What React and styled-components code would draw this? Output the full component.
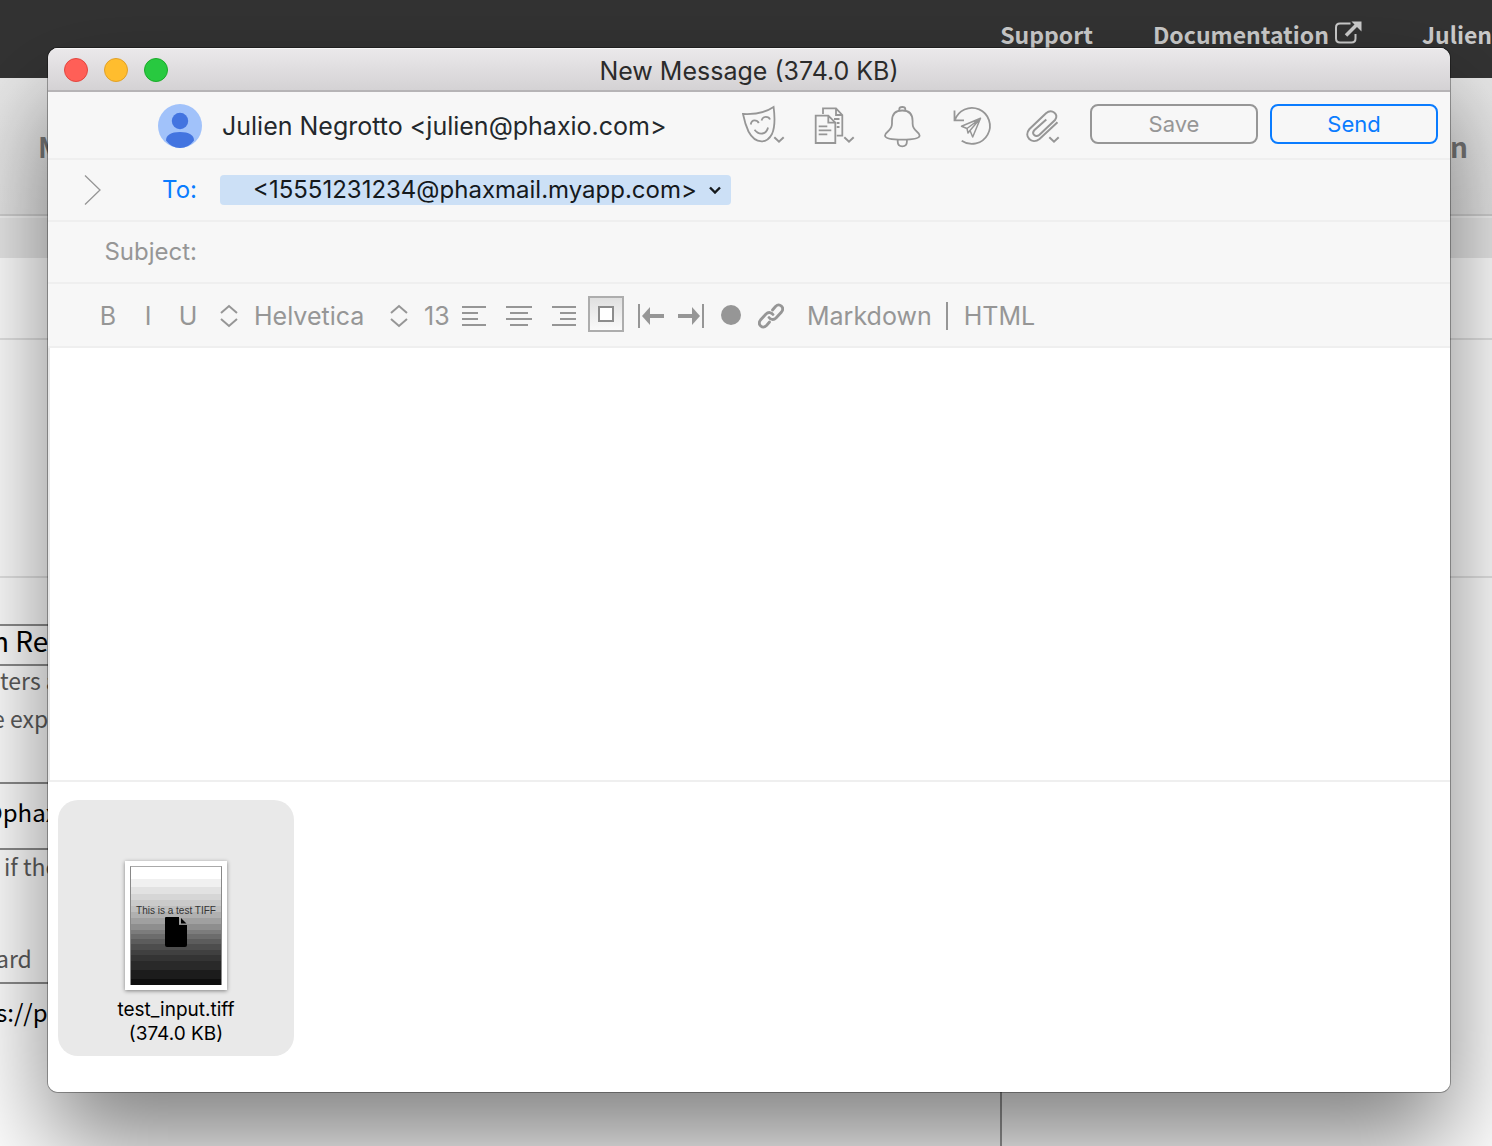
import React from "react";
import styled, { createGlobalStyle } from "styled-components";

const GREY = "#969696";
const BLUE = "#0a7cff";
const RULE = "#efefef";
const uiFont = `Inter, "Liberation Sans", sans-serif`;
const siteFont = `"Noto Sans CJK SC", "Noto Sans", sans-serif`;

const GlobalStyle = createGlobalStyle`
  * { box-sizing: border-box; }
  body { margin: 0; background: #fff; font-family: ${uiFont}; }
  button, input, textarea, select { font: inherit; color: inherit; }
`;

/* ---------- web page behind the window ---------- */

const Desktop = styled.div`
  position: relative;
  min-height: 100vh;
  overflow: hidden;
  display: flex;
  flex-direction: column;
  font-family: ${siteFont};
`;

const SiteHeader = styled.header`
  height: 78px;
  padding-bottom: 10px;
  background: #333;
  display: flex;
  align-items: center;
  justify-content: flex-end;
  gap: 60px;
`;

const SiteLink = styled.a`
  display: flex;
  align-items: center;
  gap: 6px;
  color: #ccc;
  font-size: 23px;
  line-height: 32px;
  font-weight: 700;
  text-decoration: none;
`;

const SiteTabs = styled.nav`
  height: 138px;
  padding: 0 24px 0 38px;
  display: flex;
  align-items: center;
  justify-content: space-between;
  background: linear-gradient(#e9e9e9, #e5e5e5);
  border-bottom: 2px solid #cfcfcf;
`;

const SiteTab = styled.a`
  color: #777;
  font-size: 28px;
  line-height: 40px;
  font-weight: 700;
  text-decoration: none;
`;

const SiteSubBar = styled.div`
  height: 42px;
  background: #e8e8e8;
  border-top: 2px solid #f2f2f2;
`;

const SiteBand = styled.div`
  height: ${(p) => p.$height}px;
  border-bottom: 2px solid #e4e4e4;
`;

const SiteForm = styled.main`
  flex: 1;
  width: 1002px;
  padding-top: 46px;
  border-right: 2px solid #999;
`;

const FormBlock = styled.div`
  height: ${(p) => p.$height}px;
  border-top: 2px solid #8c8c8c;
  overflow: hidden;
`;

const FormText = styled.p`
  margin: 0;
  text-indent: ${(p) => p.$indent || 0}px;
  padding-top: ${(p) => p.$space || 0}px;
  color: ${(p) => (p.$strong ? "#000" : "#5c5c5c")};
  font-size: ${(p) => (p.$large ? 28 : p.$strong ? 24 : 23)}px;
  line-height: 28px;
  white-space: nowrap;
`;

/* ---------- compose window ---------- */

const Window = styled.form`
  position: absolute;
  inset: 48px 42px 54px 48px;
  display: flex;
  flex-direction: column;
  border-radius: 10px;
  background: #fff;
  overflow: hidden;
  font-family: ${uiFont};
`;

const WindowShadow = styled.div`
  position: absolute;
  inset: 48px 42px 54px 48px;
  border-radius: 10px;
  box-shadow: 0 0 0 1px rgba(0, 0, 0, 0.32), 0 50px 100px rgba(0, 0, 0, 0.5);
`;

const TitleBar = styled.div`
  height: 44px;
  flex: none;
  display: grid;
  grid-template-columns: 1fr auto 1fr;
  align-items: center;
  padding: 2px 16px 0;
  background: linear-gradient(#ebe9eb, #d4d2d4);
  border-bottom: 2px solid #b6b4b6;
  box-shadow: inset 0 1px 0 #f6f5f6;
`;

const Lights = styled.div`
  display: flex;
  gap: 16px;
`;

const Light = styled.button`
  width: 24px;
  height: 24px;
  padding: 0;
  border: 1px solid ${(p) => p.$edge};
  border-radius: 50%;
  background: ${(p) => p.$fill};
`;

const Title = styled.h1`
  margin: 0;
  padding-top: 2px;
  font-size: 25px;
  line-height: 32px;
  font-weight: 400;
  color: #2b2b2b;
`;

const Row = styled.div`
  height: ${(p) => p.$height || 62}px;
  flex: none;
  display: flex;
  align-items: center;
  background: #f7f7f7;
  border-bottom: 2px solid ${RULE};
`;

const SenderRow = styled(Row)`
  padding-bottom: 2px;
`;

const FormatRow = styled(Row)`
  padding-top: 2px;
`;

const Sender = styled.div`
  flex: 1;
  display: flex;
  align-items: center;
  gap: 20px;
  padding: 4px 0 0 110px;
  font-size: 25px;
  line-height: 32px;
  color: #23282c;
  white-space: nowrap;
`;

const IconButton = styled.button`
  width: ${(p) => p.$width}px;
  height: 60px;
  flex: none;
  padding: 0;
  border: 0;
  background: none;
  color: ${GREY};
  display: flex;
  align-items: center;
  justify-content: center;
  font-size: 25px;
  svg { display: block; flex: none; }
`;

const Actions = styled.div`
  display: flex;
  gap: 12px;
  padding: 0 12px;
`;

const ActionButton = styled.button`
  width: 168px;
  height: 40px;
  padding: 0;
  border: 2px solid currentColor;
  border-radius: 8px;
  background: transparent;
  color: ${(p) => (p.$primary ? BLUE : GREY)};
  font-size: 22px;
  line-height: 32px;
`;

const LabelCell = styled.div`
  width: 172px;
  flex: none;
  padding: 0 23px 0 36px;
  display: flex;
  align-items: center;
  justify-content: space-between;
`;

const Disclosure = styled.button`
  padding: 0;
  border: 0;
  background: none;
  color: ${GREY};
  svg { display: block; }
`;

const FieldLabel = styled.label`
  margin-left: auto;
  color: ${(p) => (p.$active ? BLUE : GREY)};
  font-size: 24px;
  line-height: 32px;
`;

const Recipient = styled.button`
  height: 30px;
  padding: 0 10px 0 33px;
  border: 0;
  border-radius: 4px;
  background: #cce0f6;
  color: #15191c;
  display: flex;
  align-items: center;
  gap: 12px;
  font-size: 24px;
  line-height: 30px;
  font-weight: 400;
`;

const SubjectInput = styled.input`
  flex: 1;
  height: 40px;
  padding: 0;
  border: 0;
  outline: 0;
  background: transparent;
  font-size: 24px;
`;

const FormatGroup = styled.div`
  display: flex;
  align-items: center;
  padding-left: ${(p) => p.$inset || 0}px;
`;

const Picker = styled.label`
  display: flex;
  align-items: center;
  gap: 16px;
  width: ${(p) => p.$width}px;
  color: ${GREY};
  svg { flex: none; }
`;

const PickerSelect = styled.select`
  appearance: none;
  flex: 1;
  min-width: 0;
  padding: 0;
  border: 0;
  background: transparent;
  font-size: 25px;
  line-height: 32px;
`;

const BoxButton = styled.button`
  width: 36px;
  height: 36px;
  margin: 0 7px 4px 2px;
  padding: 0;
  border: 2px solid #adadad;
  background: linear-gradient(#e0e0e0, #fafafa);
  display: flex;
  align-items: center;
  justify-content: center;
`;

const BoxMark = styled.span`
  width: 16px;
  height: 16px;
  border: 2px solid #8c8c8c;
  background: #fff;
`;

const ModeButton = styled.button`
  padding: 0 14px 0 16px;
  border: 0;
  background: none;
  color: ${GREY};
  font-size: 25px;
  line-height: 28px;
  & + & { border-left: 2px solid ${GREY}; }
`;

const Body = styled.textarea`
  flex: 1;
  min-height: 120px;
  padding: 16px;
  border: 0;
  border-left: 2px solid #e9e9e9;
  outline: 0;
  resize: none;
  background: #fff;
  font-size: 25px;
`;

const Attachments = styled.div`
  flex: none;
  padding: 18px 10px 36px;
  border-top: 2px solid ${RULE};
  display: flex;
`;

const Attachment = styled.figure`
  width: 236px;
  height: 256px;
  margin: 0;
  padding-bottom: 10px;
  border-radius: 20px;
  background: #e9e9e9;
  display: flex;
  flex-direction: column;
  align-items: center;
  justify-content: flex-end;
`;

const Thumb = styled.div`
  width: 102px;
  height: 129px;
  padding: 5px;
  background: #fff;
  box-shadow: 0 1px 4px rgba(0, 0, 0, 0.45);
`;

const Scan = styled.div`
  height: 100%;
  border: 1px solid #aaa;
  border-width: 1px 1px 0;
  border-color: #aaa #888;
  padding-top: 38px;
  display: flex;
  flex-direction: column;
  align-items: center;
  color: #333;
  font-family: "Liberation Sans", sans-serif;
  font-size: 10px;
  line-height: 12px;
  white-space: nowrap;
  background: linear-gradient(
    #fff 0 10%, #f0f0f0 10% 17%, #e2e2e2 17% 23%, #d6d6d6 23% 28%,
    #cacaca 28% 33%, #bfbfbf 33% 38%, #b0b0b0 38% 43%, #a0a0a0 43% 48%,
    #8e8e8e 48% 53%, #7c7c7c 53% 57%, #6c6c6c 57% 61%, #5c5c5c 61% 65%,
    #4d4d4d 65% 70%, #404040 70% 75%, #343434 75% 80%, #292929 80% 87%,
    #1c1c1c 87% 95%, #0e0e0e 95%
  );
`;

const Caption = styled.figcaption`
  margin-top: 8px;
  text-align: center;
  font-size: 19px;
  line-height: 24px;
  color: #000;
`;

/* ---------- icons ---------- */

const Glyph = ({ w, h, sw = 2, children }) => (
  <svg width={w} height={h} viewBox={`0 0 ${w} ${h}`} fill="none" stroke="currentColor" strokeWidth={sw} aria-hidden="true">
    {children}
  </svg>
);

const ExternalIcon = () => (
  <Glyph w={27} h={32}>
    <path d="M15.500 5.500H5Q1 5.500 1 9.500v11q0 4 4 4h11.500q4 0 4-4v-4.500" />
    <path d="M11 17.500 22 6.500" strokeWidth="3.600" />
    <path d="M16.500 3.500h10v10z" fill="currentColor" stroke="none" />
  </Glyph>
);

const Avatar = () => (
  <svg width="44" height="44" viewBox="0 0 44 44" aria-hidden="true">
    <circle cx="22" cy="22" r="22" fill="#a1c2fa" />
    <circle cx="22" cy="17" r="8.200" fill="#4374e0" />
    <path d="M8 36.500C8 31 13 28 22 28s14 3 14 8.500Q30.500 44 22 44T8 36.500z" fill="#4374e0" />
  </svg>
);

const MaskIcon = () => (
  <Glyph w={70} h={64} sw={1.8}>
    <path d="M15 22Q34 23 45.600 15Q48 33 44 42Q40 49.500 33.500 49.400Q25.500 49 20.500 39.500Q17 32 15 22z" />
    <path d="M22.700 32.500Q23.500 28.300 26.500 28.300T30.800 31M33.500 28.500Q34.500 24.800 37.800 24.800T42 27.500M26.500 37.800Q30 42.300 34.500 41.500T40 35.500" />
    <path d="m46.300 45.300 4.700 4.400 4.700-4.400" strokeWidth="2" />
  </Glyph>
);

const DocsIcon = () => (
  <Glyph w={70} h={64} sw={1.8}>
    <path d="M17.700 23.700h12.600l7 7v20.300h-19.600zM30.300 23.700v7h7" />
    <path d="M25 22v-5.700h13l6.300 6.700v20.700h-5.600M38 16.300v6.700h6.300" />
    <path d="M20.700 34.300h8.600M20.700 38.300h12.600M20.700 42.300h8.600M36 27h5.500M38.700 31h2.800M38.700 35h2.800" />
    <path d="m46.300 45.300 4.700 4.400 4.700-4.400" strokeWidth="2" />
  </Glyph>
);

const BellIcon = () => (
  <Glyph w={70} h={64} sw={1.8}>
    <path d="M24 31.500v-2.500Q24 18.500 34.300 18.500T44.600 29v2.500C44.600 39.500 51.600 39.500 51.600 43.500Q51.600 47.600 34.300 47.600T17 43.500C17 39.500 24 39.500 24 31.500z" />
    <path d="M31.300 18.500v-1.500q0-2 3-2t3 2v1.500M29.700 48v1.500q0 4.800 4.600 4.800t4.600-4.800v-1.500" />
  </Glyph>
);

const SendLaterIcon = () => (
  <Glyph w={70} h={64} sw={1.8}>
    <path d="M16.800 28.300A18 18 0 1 1 23.700 48.700M16.500 18.500v9.800h9.500" />
    <path d="M42.500 26.300 23.500 34.300l5.500 2.200zM42.500 26.300 32 38.500l2.700 6.500zM29 36.500l1 4.500 2-2.500" strokeWidth="1.500" strokeLinejoin="round" />
  </Glyph>
);

const ClipIcon = () => (
  <Glyph w={70} h={64} sw={2}>
    <path d="M49.500 30.300 31.500 47C24 53 15 44.500 21.500 37L38 21.200C44 16.300 51.500 22.500 47 28L31.500 42.700C27.500 46 23 42 26.500 38L38.300 27.500" />
    <path d="m41.300 45.300 4.700 4.400 4.700-4.400" />
  </Glyph>
);

const Stepper = () => (
  <Glyph w={18} h={24} sw={2}>
    <path d="m1 9 8-7 8 7M1 15l8 7 8-7" />
  </Glyph>
);

const AlignIcon = ({ side }) => {
  const [wide, narrow] = {
    left: ["M1 {y}h24", "M1 {y}h16"],
    center: ["M0 {y}h26", "M4 {y}h18"],
    right: ["M1 {y}h24", "M9 {y}h16"],
  }[side];
  const at = (line, y) => line.replace("{y}", y);
  return (
    <Glyph w={26} h={20}>
      <path d={[at(wide, 1), at(narrow, 7), at(side === "center" ? wide : narrow, 13), at(side === "center" ? narrow : wide, 19)].join("")} />
    </Glyph>
  );
};

const OutdentIcon = () => (
  <Glyph w={26} h={24}>
    <path d="M1 0v24" />
    <path d="M10 12h16" strokeWidth="4" />
    <path d="M4 12l8-9v18z" fill="currentColor" stroke="none" />
  </Glyph>
);

const IndentIcon = () => (
  <Glyph w={26} h={24}>
    <path d="M25 0v24" />
    <path d="M0 12h16" strokeWidth="4" />
    <path d="M22 12l-8-9v18z" fill="currentColor" stroke="none" />
  </Glyph>
);

const LinkIcon = () => (
  <Glyph w={26} h={26} sw={2.8}>
    <g strokeLinecap="round">
      <path d="M14.500 7l3-3.500c4-4 9.500 1 6 5.500l-5.500 6c-2.500 2.500-5.500 1.500-7-.5" />
      <path d="M11.500 19l-3 3.500c-4 4-9.500-1-6-5.500l5.500-6c2.500-2.500 5.500-1.500 7 .5" />
    </g>
  </Glyph>
);

export default function App() {
  return (
    <Desktop>
      <GlobalStyle />
      <SiteHeader>
        <SiteLink href="#support">Support</SiteLink>
        <SiteLink href="#docs">Documentation<ExternalIcon /></SiteLink>
        <SiteLink href="#account">Julien</SiteLink>
      </SiteHeader>
      <SiteTabs>
        <SiteTab href="#m">M</SiteTab>
        <SiteTab href="#n">n</SiteTab>
      </SiteTabs>
      <SiteSubBar />
      <SiteBand $height={82} />
      <SiteBand $height={238} />
      <SiteForm>
        <FormBlock $height={40}><FormText $strong $large $indent={-8}>n Re</FormText></FormBlock>
        <FormBlock $height={118}>
          <FormText>ters a</FormText>
          <FormText $indent={-8} $space={10}>e exp</FormText>
        </FormBlock>
        <FormBlock $height={66}><FormText $strong $indent={-20} $space={14}>@phax</FormText></FormBlock>
        <FormBlock $height={134}>
          <FormText $indent={4} $space={2}>if the</FormText>
          <FormText $indent={-4} $space={64}>ard</FormText>
        </FormBlock>
        <FormBlock $height={66}><FormText $strong $indent={-4} $space={14}>s://p</FormText></FormBlock>
      </SiteForm>

      <WindowShadow />
      <Window onSubmit={(e) => e.preventDefault()}>
        <TitleBar>
          <Lights>
            <Light type="button" aria-label="Close" $fill="#ff5f57" $edge="#e2463f" />
            <Light type="button" aria-label="Minimise" $fill="#ffbd2e" $edge="#e0a028" />
            <Light type="button" aria-label="Zoom" $fill="#28c940" $edge="#1aab29" />
          </Lights>
          <Title>New Message (374.0 KB)</Title>
        </TitleBar>

        <SenderRow $height={68}>
          <Sender><Avatar />Julien Negrotto &lt;julien@phaxio.com&gt;</Sender>
          <IconButton type="button" $width={70} aria-label="Persona"><MaskIcon /></IconButton>
          <IconButton type="button" $width={70} aria-label="Templates"><DocsIcon /></IconButton>
          <IconButton type="button" $width={70} aria-label="Reminder"><BellIcon /></IconButton>
          <IconButton type="button" $width={70} aria-label="Send later"><SendLaterIcon /></IconButton>
          <IconButton type="button" $width={70} aria-label="Attach"><ClipIcon /></IconButton>
          <Actions>
            <ActionButton type="button">Save</ActionButton>
            <ActionButton type="submit" $primary>Send</ActionButton>
          </Actions>
        </SenderRow>

        <Row>
          <LabelCell>
            <Disclosure type="button" aria-label="More fields">
              <Glyph w={18} h={30} sw={1.3}><path d="m1 .5 15 14.500-15 14.500" /></Glyph>
            </Disclosure>
            <FieldLabel htmlFor="recipient" $active>To:</FieldLabel>
          </LabelCell>
          <Recipient id="recipient" type="button">
            &lt;15551231234@phaxmail.myapp.com&gt;
            <Glyph w={12} h={8} sw={2.4}><path d="m1 1.500 5 5 5-5" /></Glyph>
          </Recipient>
        </Row>

        <Row>
          <LabelCell><FieldLabel htmlFor="subject">Subject:</FieldLabel></LabelCell>
          <SubjectInput id="subject" type="text" />
        </Row>

        <FormatRow $height={64}>
          <FormatGroup $inset={40}>
            <IconButton type="button" $width={40}>B</IconButton>
            <IconButton type="button" $width={40}>I</IconButton>
            <IconButton type="button" $width={40}>U</IconButton>
          </FormatGroup>
          <FormatGroup $inset={12}>
            <Picker $width={170}>
              <Stepper />
              <PickerSelect aria-label="Font"><option>Helvetica</option></PickerSelect>
            </Picker>
            <Picker $width={61}>
              <Stepper />
              <PickerSelect aria-label="Size"><option>13</option></PickerSelect>
            </Picker>
          </FormatGroup>
          <FormatGroup>
            <IconButton type="button" $width={45} aria-label="Align left"><AlignIcon side="left" /></IconButton>
            <IconButton type="button" $width={45} aria-label="Align centre"><AlignIcon side="center" /></IconButton>
            <IconButton type="button" $width={45} aria-label="Align right"><AlignIcon side="right" /></IconButton>
            <BoxButton type="button" aria-label="Frame"><BoxMark /></BoxButton>
            <IconButton type="button" $width={40} aria-label="Outdent"><OutdentIcon /></IconButton>
            <IconButton type="button" $width={40} aria-label="Indent"><IndentIcon /></IconButton>
            <IconButton type="button" $width={40} aria-label="Text colour">
              <Glyph w={20} h={22}><circle cx="10" cy="10" r="10" fill="currentColor" stroke="none" /></Glyph>
            </IconButton>
            <IconButton type="button" $width={40} aria-label="Link"><LinkIcon /></IconButton>
          </FormatGroup>
          <FormatGroup>
            <ModeButton type="button">Markdown</ModeButton>
            <ModeButton type="button">HTML</ModeButton>
          </FormatGroup>
        </FormatRow>

        <Body aria-label="Message" />

        <Attachments>
          <Attachment>
            <Thumb>
              <Scan>
                This is a test TIFF
                <svg width="24" height="30" viewBox="0 0 24 30" aria-hidden="true">
                  <path d="M2 0h13v8h8v20q0 2-2 2H3q-2 0-2-2V1q0-1 1-1zM17 1l5.500 5.500H17z" fill="#000" />
                </svg>
              </Scan>
            </Thumb>
            <Caption>test_input.tiff<br />(374.0 KB)</Caption>
          </Attachment>
        </Attachments>
      </Window>
    </Desktop>
  );
}
